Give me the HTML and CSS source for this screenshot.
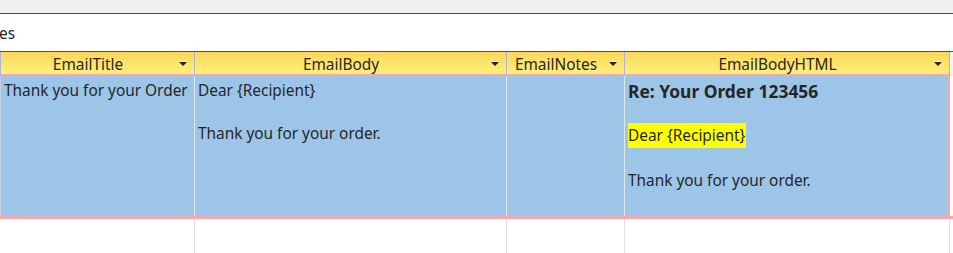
FILE: index.html
```html
<!DOCTYPE html>
<html lang="en">
<head>
  <meta charset="UTF-8">
  <title>EmailTemplates</title>
  <link rel="stylesheet" href="styles.css">
</head>
<body>
  <div class="tabstrip"></div>
  <div class="caption"><span class="caption-text">es</span></div>

  <div class="sheet">
    <div class="row head">
      <div class="hcell"><span>EmailTitle</span><i class="drop"></i></div>
      <div class="hcell"><span>EmailBody</span><i class="drop"></i></div>
      <div class="hcell"><span>EmailNotes</span><i class="drop"></i></div>
      <div class="hcell"><span>EmailBodyHTML</span><i class="drop"></i></div>
      <div class="hcell filler"></div>
    </div>

    <div class="row record">
      <div class="cell">Thank you for your Order</div>
      <div class="cell">
        <p>Dear {Recipient}</p>
        <p class="gap">Thank you for your order.</p>
      </div>
      <div class="cell"></div>
      <div class="cell html">
        <p class="subject">Re: Your Order 123456</p>
        <p class="gap"><mark>Dear {Recipient}</mark></p>
        <p class="gap2">Thank you for your order.</p>
      </div>
      <div class="cell filler"></div>
    </div>

    <div class="row blank">
      <div class="cell"></div>
      <div class="cell"></div>
      <div class="cell"></div>
      <div class="cell"></div>
      <div class="cell filler"></div>
    </div>
  </div>
</body>
</html>
```

FILE: styles.css
```css
body {
  margin: 0;
  font-family: "Noto Sans", "Open Sans", sans-serif;
  font-size: 15.4px;
  color: #262626;
  background: #fff;
  overflow: hidden;
}

.tabstrip {
  height: 13px;
  background-color: #f0f0f0;
  border-bottom: 1px solid #a4262c;
}

.caption {
  height: 38px;
  border-bottom: 1px solid #a4262c;
  display: flex;
  align-items: center;
  padding-top: 2px;
  box-sizing: border-box;
  overflow: hidden;
}

.caption-text {
  margin-left: -1px;
}

.row {
  display: grid;
  grid-template-columns: 195px 312px 118px 325px 1fr;
}

.head {
  height: 22px;
  background: linear-gradient(#ffd65a, #fff07c);
  border-bottom: 2px solid #f5a9ad;
}

.hcell {
  position: relative;
  display: flex;
  align-items: center;
  justify-content: center;
  border-right: 1px solid #a9b4d8;
  line-height: 22px;
  padding: 2px 19px 0 0;
  box-sizing: border-box;
}

.hcell:first-child {
  border-left: 1px solid #a9b4d8;
}

.hcell.filler {
  background: #f4f4fc;
  border-right: none;
}

.drop {
  position: absolute;
  right: 7px;
  top: 10px;
  width: 0;
  height: 0;
  border-left: 4px solid transparent;
  border-right: 4px solid transparent;
  border-top: 4px solid #222;
  filter: drop-shadow(0 -1px 0 #fff);
}

.record {
  height: 140px;
  background-color: #9dc5e8;
  border-bottom: 3px solid #f5a9ad;
}

.record .cell {
  border-right: 1px solid #e6e6e6;
  padding: 4px 3px 0 3px;
  line-height: 21px;
  white-space: nowrap;
}

.record .cell:first-child {
  border-left: 1px solid #c8d0dc;
}

.record .html {
  border-right: 3px solid #f5a9ad;
  padding-top: 5px;
}

.record .filler {
  background: #fff;
  border-right: none;
  padding: 0;
}

p {
  margin: 0;
}

.gap {
  margin-top: 22px;
}

.html .gap {
  margin-top: 23px;
}

.gap2 {
  margin-top: 24px;
}

.subject {
  font-weight: bold;
  font-size: 17.4px;
}

mark {
  background-color: #ffff00;
  color: #262626;
  padding: 2px 1px 2px 0;
}

.blank {
  height: 40px;
}

.blank .cell {
  border-right: 1px solid #e2e2e2;
}

.blank .filler {
  border-right: none;
}
```
